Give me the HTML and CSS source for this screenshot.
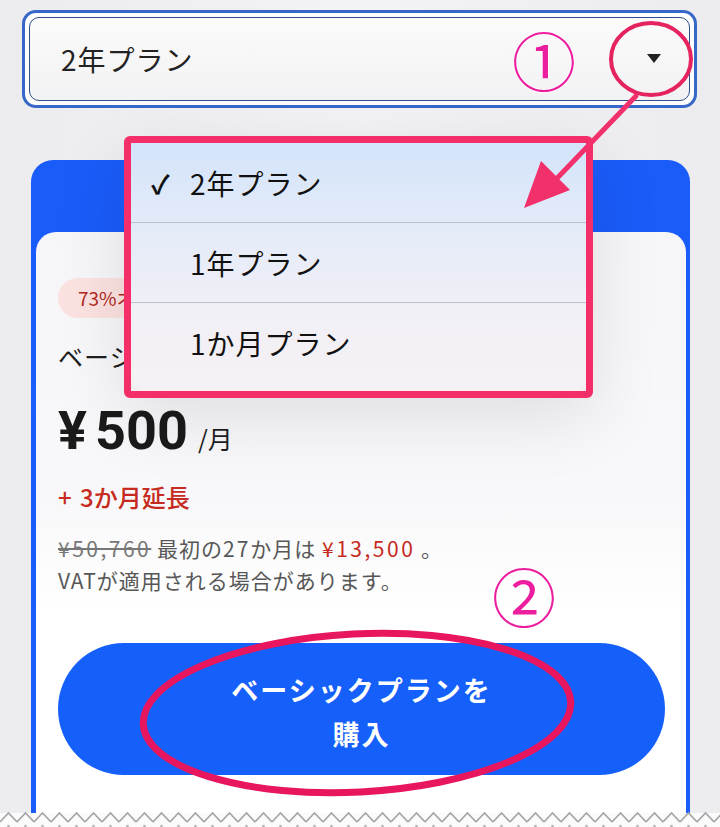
FILE: index.html
```html
<!DOCTYPE html>
<html lang="ja">
<head>
<meta charset="utf-8">
<link rel="stylesheet" href="styles.css">
</head>
<body>
<div class="page">
  <div class="select">
    <div class="select-inner">
      <span class="select-value">2年プラン</span>
      <span class="caret"></span>
    </div>
  </div>

  <div class="card">
    <div class="card-body">
      <div class="badge">73%オフ</div>
      <div class="plan-name">ベーシックプラン</div>
      <div class="price"><span class="amount"><span class="yen">¥</span>500</span><span class="per">/月</span></div>
      <div class="extra">+ 3か月延長</div>
      <div class="note">
        <div><s class="old">¥50,760</s> 最初の<span class="num-s">27</span>か月は <span class="red">¥13,500</span> 。</div>
        <div>VATが適用される場合があります。</div>
      </div>
      <button class="buy">ベーシックプランを<br>購入</button>
    </div>
  </div>
  <div class="tear">
    <svg width="720" height="19" viewBox="0 0 720 19">
      <defs>
        <pattern id="zz" width="17" height="19" patternUnits="userSpaceOnUse">
          <polyline points="0,14 8.5,5 17,14" fill="none" stroke="#a4a4a8" stroke-width="1.6"/>
          <circle cx="8.5" cy="18" r="1.3" fill="#b4b4b8"/>
        </pattern>
      </defs>
      <rect width="720" height="19" fill="url(#zz)"/>
    </svg>
  </div>

  <div class="menu">
    <div class="menu-inner">
      <div class="menu-item"><span class="check">✓</span>2年プラン</div>
      <div class="menu-item">1年プラン</div>
      <div class="menu-item">1か月プラン</div>
    </div>
  </div>

  <span class="num num1">①</span>
  <span class="num num2">②</span>

  <svg class="marks" width="720" height="827" viewBox="0 0 720 827">
    <ellipse cx="651" cy="59" rx="40" ry="36" fill="none" stroke="#e4235f" stroke-width="4"/>
    <line x1="636" y1="96" x2="540" y2="196" stroke="#f2306b" stroke-width="5" stroke-linecap="round"/>
    <polygon points="524,208 541,161 570,190" fill="#f2306b"/>
    <ellipse cx="357" cy="713" rx="214" ry="79" fill="none" stroke="#e8155f" stroke-width="7" transform="rotate(-3 357 713)"/>
  </svg>
</div>
</body>
</html>
```

FILE: styles.css
```css
* { box-sizing: border-box; }
html, body { margin: 0; padding: 0; }
body {
  background: #eeeef0;
  font-family: "Noto Sans CJK JP", "Noto Sans", sans-serif;
  color: #1e1e1e;
}
.page {
  position: relative;
  width: 720px;
  height: 827px;
  overflow: hidden;
  padding-top: 10px;
  background: linear-gradient(90deg, #ececee 0%, #f3f3f5 50%, #ececee 100%);
}
.select {
  margin: 0 23px 0 22px;
  height: 98px;
  border: 3px solid #3767c7;
  border-radius: 14px;
  padding: 4px;
  background: #ffffff;
}
.select-inner {
  height: 100%;
  border: 1.5px solid #2f4f8c;
  border-radius: 10px;
  background: linear-gradient(180deg, #fbfbfb, #f2f2f4);
  display: flex;
  align-items: center;
  justify-content: space-between;
  padding: 0 28px 0 31px;
}
.select-value {
  font-size: 28px;
  letter-spacing: 1px;
  color: #222;
}
.caret {
  width: 0;
  height: 0;
  border-left: 7px solid transparent;
  border-right: 7px solid transparent;
  border-top: 9px solid #222;
  margin-top: -2px;
}
.card {
  margin: 52px 30px 0 31px;
  background: #1a5cf9;
  border-radius: 22px 22px 0 0;
  padding: 72px 4px 0 5px;
  height: 663px;
}
.card-body {
  background: linear-gradient(180deg, #f6f6f8 0%, #f8f8fa 45%, #ffffff 65%);
  border-radius: 20px 20px 0 0;
  padding: 46px 21px 0 22px;
  height: 100%;
}
.badge {
  display: inline-block;
  height: 40px;
  line-height: 40px;
  padding: 0 20px;
  border-radius: 20px;
  background: #fbe2e0;
  color: #b2271f;
  font-size: 19px;
}
.plan-name {
  margin-top: 21px;
  font-size: 25px;
  line-height: 34px;
  letter-spacing: 1px;
}
.price {
  margin-top: 28px;
  height: 60px;
  line-height: 60px;
  display: flex;
  align-items: baseline;
  gap: 10px;
}
.amount {
  font-family: Roboto, "Noto Sans CJK JP", sans-serif;
  font-size: 54px;
  font-weight: 700;
  color: #1a1a1a;
}
.yen { margin-right: 8px; }
.per {
  font-size: 25px;
}
.extra {
  margin-top: 21px;
  font-size: 24px;
  line-height: 30px;
  color: #c62a20;
  font-weight: 500;
  word-spacing: 3px;
}
.note {
  margin-top: 20px;
  font-size: 21px;
  line-height: 32px;
  letter-spacing: 1px;
  color: #575757;
}
.old { color: #777; letter-spacing: 2.5px; }
.red { color: #c62a20; letter-spacing: 2.5px; }
.num-s { letter-spacing: 2px; }
.buy {
  display: block;
  margin-top: 47px;
  width: 100%;
  height: 132px;
  border: none;
  border-radius: 66px;
  background: #1560fa;
  color: #fff;
  font-family: "Noto Sans CJK JP", sans-serif;
  font-size: 27px;
  font-weight: 700;
  line-height: 44px;
  letter-spacing: 2px;
  padding: 6px 0 0;
}
.tear {
  position: absolute;
  left: 0;
  top: 808px;
  width: 720px;
  height: 19px;
  background: linear-gradient(180deg, rgba(255,255,255,0) 0, rgba(255,255,255,0) 5px, #fbfbfb 5px);
}
.tear svg { display: block; }
.menu {
  position: absolute;
  left: 124px;
  top: 136px;
  width: 469px;
  height: 262px;
  border: 7px solid #f42e68;
  border-radius: 6px;
  background: #f0eef0;
  box-shadow: 0 20px 70px rgba(0, 0, 0, 0.10);
}
.menu-inner {
  height: 100%;
  border-radius: 0 0 14px 14px;
  background: linear-gradient(180deg, #d4e4fb 0%, #e4ebf8 35%, #f1f0f6 70%, #f6f1f4 100%);
  overflow: hidden;
}
.menu-item {
  position: relative;
  height: 80px;
  display: flex;
  align-items: center;
  padding-left: 59px;
  font-size: 28px;
  color: #111;
  letter-spacing: 1px;
  border-bottom: 1px solid #b9c1cd;
}
.menu-item:last-child { border-bottom: none; }
.check {
  position: absolute;
  left: 20px;
  font-size: 26px;
  font-weight: 700;
}
.num {
  position: absolute;
  font-size: 64px;
  line-height: 1;
  color: #ec1d9e;
  text-shadow: 0 0 3px #fff, 0 0 3px #fff;
}
.num1 { left: 512px; top: 26px; }
.num2 { left: 492px; top: 562px; }
.marks {
  position: absolute;
  left: 0;
  top: 0;
  pointer-events: none;
}
```
